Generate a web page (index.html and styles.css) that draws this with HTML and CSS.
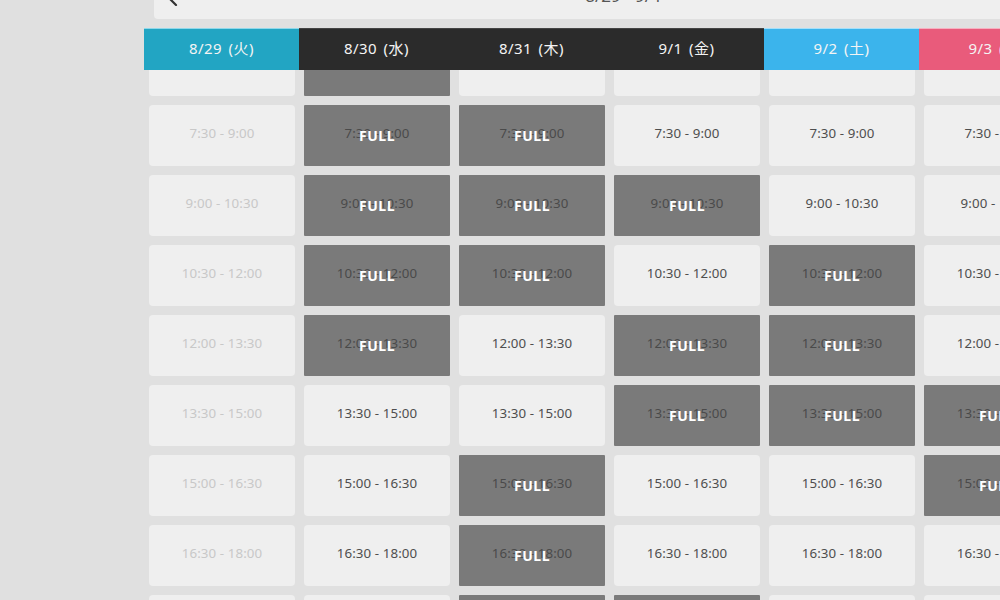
FILE: index.html
```html
<!DOCTYPE html>
<html lang="ja">
<head>
<meta charset="utf-8">
<title>予約</title>
<link rel="stylesheet" href="styles.css">
</head>
<body>
<div class="page">
  <div class="topbar">
    <svg class="prev" width="14" height="14" viewBox="0 0 14 14"><path d="M10 1 L4 7 L10 13" fill="none" stroke="#333" stroke-width="2.2" stroke-linecap="round" stroke-linejoin="round"/></svg>
    <span class="range">8/29 - 9/4</span>
  </div>
  <div class="schedule">
    <div class="head">
      <div class="day today">8/29 (火)</div>
      <div class="day">8/30 (水)</div>
      <div class="day">8/31 (木)</div>
      <div class="day">9/1 (金)</div>
      <div class="day sat">9/2 (土)</div>
      <div class="day sun">9/3 (日)</div>
    </div>
    <div class="grid">
      <div class="slot past">6:00 - 7:30</div>
      <div class="slot full"><span class="t">6:00 - 7:30</span></div>
      <div class="slot">6:00 - 7:30</div>
      <div class="slot">6:00 - 7:30</div>
      <div class="slot">6:00 - 7:30</div>
      <div class="slot">6:00 - 7:30</div>

      <div class="slot past">7:30 - 9:00</div>
      <div class="slot full"><span class="t">7:30 - 9:00</span><span class="f">FULL</span></div>
      <div class="slot full"><span class="t">7:30 - 9:00</span><span class="f">FULL</span></div>
      <div class="slot">7:30 - 9:00</div>
      <div class="slot">7:30 - 9:00</div>
      <div class="slot">7:30 - 9:00</div>

      <div class="slot past">9:00 - 10:30</div>
      <div class="slot full"><span class="t">9:00 - 10:30</span><span class="f">FULL</span></div>
      <div class="slot full"><span class="t">9:00 - 10:30</span><span class="f">FULL</span></div>
      <div class="slot full"><span class="t">9:00 - 10:30</span><span class="f">FULL</span></div>
      <div class="slot">9:00 - 10:30</div>
      <div class="slot">9:00 - 10:30</div>

      <div class="slot past">10:30 - 12:00</div>
      <div class="slot full"><span class="t">10:30 - 12:00</span><span class="f">FULL</span></div>
      <div class="slot full"><span class="t">10:30 - 12:00</span><span class="f">FULL</span></div>
      <div class="slot">10:30 - 12:00</div>
      <div class="slot full"><span class="t">10:30 - 12:00</span><span class="f">FULL</span></div>
      <div class="slot">10:30 - 12:00</div>

      <div class="slot past">12:00 - 13:30</div>
      <div class="slot full"><span class="t">12:00 - 13:30</span><span class="f">FULL</span></div>
      <div class="slot">12:00 - 13:30</div>
      <div class="slot full"><span class="t">12:00 - 13:30</span><span class="f">FULL</span></div>
      <div class="slot full"><span class="t">12:00 - 13:30</span><span class="f">FULL</span></div>
      <div class="slot">12:00 - 13:30</div>

      <div class="slot past">13:30 - 15:00</div>
      <div class="slot">13:30 - 15:00</div>
      <div class="slot">13:30 - 15:00</div>
      <div class="slot full"><span class="t">13:30 - 15:00</span><span class="f">FULL</span></div>
      <div class="slot full"><span class="t">13:30 - 15:00</span><span class="f">FULL</span></div>
      <div class="slot full"><span class="t">13:30 - 15:00</span><span class="f">FULL</span></div>

      <div class="slot past">15:00 - 16:30</div>
      <div class="slot">15:00 - 16:30</div>
      <div class="slot full"><span class="t">15:00 - 16:30</span><span class="f">FULL</span></div>
      <div class="slot">15:00 - 16:30</div>
      <div class="slot">15:00 - 16:30</div>
      <div class="slot full"><span class="t">15:00 - 16:30</span><span class="f">FULL</span></div>

      <div class="slot past">16:30 - 18:00</div>
      <div class="slot">16:30 - 18:00</div>
      <div class="slot full"><span class="t">16:30 - 18:00</span><span class="f">FULL</span></div>
      <div class="slot">16:30 - 18:00</div>
      <div class="slot">16:30 - 18:00</div>
      <div class="slot">16:30 - 18:00</div>

      <div class="slot past">18:00 - 19:30</div>
      <div class="slot">18:00 - 19:30</div>
      <div class="slot full"><span class="t">18:00 - 19:30</span><span class="f">FULL</span></div>
      <div class="slot full"><span class="t">18:00 - 19:30</span><span class="f">FULL</span></div>
      <div class="slot">18:00 - 19:30</div>
      <div class="slot">18:00 - 19:30</div>
    </div>
  </div>
</div>
</body>
</html>
```

FILE: styles.css
```css
html, body {
  margin: 0;
  padding: 0;
  background: #e0e0e0;
  overflow: hidden;
  height: 600px;
}
body {
  font-family: "Noto Sans", "Noto Sans CJK JP", sans-serif;
  color: #444;
}
.page {
  margin-top: -23px;
  padding-left: 144px;
  width: 1000px;
}
.topbar {
  margin-left: 10px;
  width: 938px;
  height: 42px;
  background: #efefef;
  border-radius: 0 0 4px 4px;
  display: flex;
  align-items: center;
  justify-content: center;
  position: relative;
}
.prev {
  position: absolute;
  left: 12px;
  top: 15px;
}
.range {
  font-size: 17px;
  color: #555;
  padding-bottom: 6px;
}
.schedule {
  margin-top: 9px;
  width: 930px;
}
.head {
  display: grid;
  grid-template-columns: repeat(6, 155px);
  height: 42px;
  position: relative;
  z-index: 2;
}
.day {
  background: #2b2b2b;
  color: #f4f4f4;
  font-family: "Noto Sans", "Noto Sans CJK JP", sans-serif;
  font-size: 15px;
  display: flex;
  align-items: center;
  justify-content: center;
  border-top: 1px solid #444;
  box-sizing: border-box;
  padding-bottom: 4px;
  letter-spacing: 0.5px;
  word-spacing: 2px;
}
.day.today {
  background: #22a5c3;
  border-top-color: #8fd8ea;
}
.day.sat {
  background: #3bb4ec;
  border-top-color: #a5e0fa;
}
.day.sun {
  background: #e95b7b;
  border-top-color: #f6b0c0;
}
.grid {
  margin-top: -35px;
  display: grid;
  grid-template-columns: repeat(6, 146px);
  grid-auto-rows: 61px;
  column-gap: 9px;
  row-gap: 9px;
  padding-left: 5px;
  position: relative;
  z-index: 1;
}
.slot {
  background: #efefef;
  border-radius: 4px;
  display: flex;
  align-items: center;
  justify-content: center;
  font-size: 13.3px;
  letter-spacing: 0.1px;
  color: #4e4e4e;
  padding-bottom: 5px;
  box-sizing: border-box;
  position: relative;
}
.slot.past {
  color: #c8c8c8;
}
.slot.full {
  background: #7a7a7a;
  border-radius: 1px;
  color: #4a4a4a;
}
.slot.full .f {
  position: absolute;
  left: 0;
  right: 0;
  top: 0;
  bottom: 0;
  display: flex;
  align-items: center;
  justify-content: center;
  color: #fff;
  font-weight: bold;
  font-size: 14px;
  letter-spacing: 0.5px;
  font-family: "Noto Sans", sans-serif;
}
```
